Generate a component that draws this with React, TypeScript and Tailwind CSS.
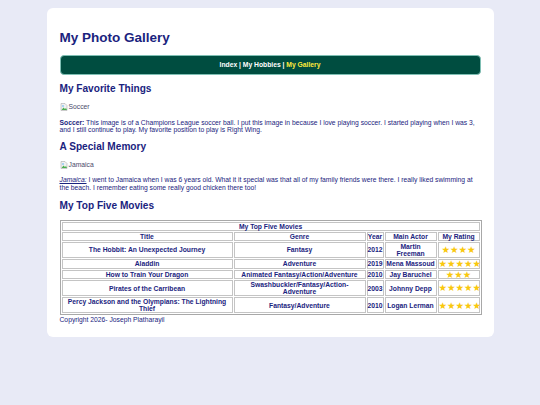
import React from "react";

const movies = [
  { title: "The Hobbit: An Unexpected Journey", genre: "Fantasy", year: "2012", actor: "Martin Freeman", stars: 4 },
  { title: "Aladdin", genre: "Adventure", year: "2019", actor: "Mena Massoud", stars: 5 },
  { title: "How to Train Your Dragon", genre: "Animated Fantasy/Action/Adventure", year: "2010", actor: "Jay Baruchel", stars: 3 },
  { title: "Pirates of the Carribean", genre: "Swashbuckler/Fantasy/Action-Adventure", year: "2003", actor: "Johnny Depp", stars: 5 },
  { title: "Percy Jackson and the Olympians: The Lightning Thief", genre: "Fantasy/Adventure", year: "2010", actor: "Logan Lerman", stars: 5 },
];

function BrokenImage({ alt }: { alt: string }) {
  return (
    <span className="inline-flex items-center text-[#4b4b6b]">
      <svg width="8" height="8" viewBox="0 0 16 16" className="mr-[1px]">
        <path d="M2 1h8l4 4v10H2z" fill="#f1f1f1" stroke="#9e9e9e" strokeWidth="1" />
        <path d="M3 14l4-5 3 3 2-2 2 4z" fill="#4caf50" />
        <circle cx="6" cy="6" r="1.5" fill="#42a5f5" />
      </svg>
      {alt}
    </span>
  );
}

export default function App() {
  const cell = "border border-[#c4c4c4] p-0 text-center align-middle font-bold leading-[7.1px]";
  return (
    <div className="min-h-[405px] w-full bg-[#e8eaf6] pt-[8px] font-['Liberation_Sans',Arial,sans-serif] text-[6.75px] leading-[1.15] text-[#1a237e]">
      <div className="mx-auto w-[447px] rounded-[6px] bg-white px-[13px] pt-[22px] pb-[13px]">
        <h1 className="text-[13.5px] font-bold leading-[15.5px]">My Photo Gallery</h1>

        <nav className="mt-[9px] rounded-[4px] border border-[#7fbfb4] bg-[#004d40] py-[5.5px] text-center font-bold text-white">
          Index | My Hobbies | <span className="text-[#ffeb3b]">My Gallery</span>
        </nav>

        <h2 className="mt-[8px] text-[10.1px] font-bold leading-[11.6px]">My Favorite Things</h2>
        <div className="mt-[8.3px] leading-[7.8px]"><BrokenImage alt="Soccer" /></div>
        <p className="mt-[5.7px]">
          <strong>Soccer:</strong> This image is of a Champions League soccer ball. I put this image in because I love playing soccer. I started playing when I was 3, and I still continue to play. My favorite position to play is Right Wing.
        </p>

        <h2 className="mt-[7.3px] text-[10.1px] font-bold leading-[11.6px]">A Special Memory</h2>
        <div className="mt-[8px] leading-[7.8px]"><BrokenImage alt="Jamaica" /></div>
        <p className="mt-[5.5px]">
          <em className="underline">Jamaica:</em> I went to Jamaica when I was 6 years old. What it it special was that all of my family friends were there. I really liked swimming at the beach. I remember eating some really good chicken there too!
        </p>

        <h2 className="mt-[8.3px] text-[10.1px] font-bold leading-[11.6px]">My Top Five Movies</h2>
        <table className="mt-[8px] w-[422px] table-fixed border-separate border-spacing-[1px] border border-[#a8a8a8]">
          <colgroup>
            <col className="w-[171px]" />
            <col className="w-[132px]" />
            <col className="w-[17px]" />
            <col className="w-[52px]" />
            <col className="w-[42px]" />
          </colgroup>
          <tbody>
            <tr>
              <td colSpan={5} className={cell}>My Top Five Movies</td>
            </tr>
            <tr>
              <th className={cell}>Title</th>
              <th className={cell}>Genre</th>
              <th className={cell}>Year</th>
              <th className={cell}>Main Actor</th>
              <th className={cell}>My Rating</th>
            </tr>
            {movies.map((m) => (
              <tr key={m.title}>
                <td className={cell}>{m.title}</td>
                <td className={cell}>{m.genre}</td>
                <td className={cell}>{m.year}</td>
                <td className={cell}>{m.actor}</td>
                <td className={cell}>
                  <span className="block whitespace-nowrap font-['DejaVu_Sans',sans-serif] text-[9.5px] font-normal leading-[7.5px] text-[#f9c80e]">
                    {"★".repeat(m.stars)}
                  </span>
                </td>
              </tr>
            ))}
          </tbody>
        </table>
        <footer className="mt-[1px]">Copyright 2026- Joseph Platharayil</footer>
      </div>
    </div>
  );
}
